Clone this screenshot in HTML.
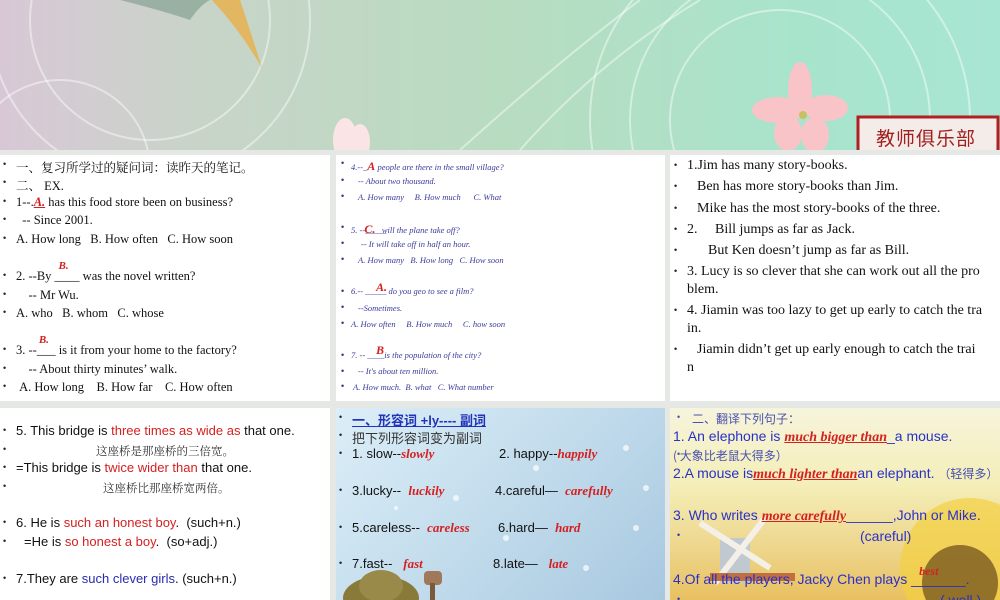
<!DOCTYPE html>
<html><head><meta charset="utf-8"><style>
*{margin:0;padding:0;box-sizing:border-box}
body{width:1000px;height:600px;overflow:hidden;background:#e6e8e6;position:relative;font-family:"Liberation Serif","Noto Serif CJK SC",serif}
.top{position:absolute;left:0;top:0;width:1000px;height:150px;background:linear-gradient(90deg,#d8c8d6 0%,#c8d4c8 20%,#b8dcc0 50%,#a8e4cc 80%,#a8e6d4 100%);overflow:hidden}
.p{position:absolute;background:#fff;overflow:hidden}
.l{position:absolute;white-space:nowrap;color:#111}
.b{position:absolute;font-size:9px;font-family:"Liberation Sans",sans-serif;color:#222}
.r{color:#d42020}
.s{font-family:"Liberation Sans","Noto Sans CJK SC",sans-serif}
.i{font-style:italic;color:#3a3a9a}
.ans{color:#d42020;font-style:italic;font-weight:bold;font-family:"Liberation Serif",serif}
</style></head><body>
<div class="top">
<svg width="1000" height="150" style="position:absolute;left:0;top:0">
<g fill="none" stroke="#ffffff" stroke-opacity=".45" stroke-width="2">
<circle cx="150" cy="20" r="120"/><circle cx="150" cy="20" r="160"/><circle cx="60" cy="170" r="90"/>
<circle cx="780" cy="120" r="150"/><circle cx="780" cy="120" r="190"/><circle cx="780" cy="120" r="110"/>
<path d="M460 150 Q560 60 640 0"/><path d="M520 150 Q600 60 700 0"/>
</g>
<path d="M120 0 Q160 10 190 20 Q200 5 210 0Z" fill="#7a9a8a" opacity=".6"/>
<path d="M212 0 Q240 30 262 68 Q250 30 240 0Z" fill="#e8b050" opacity=".85"/>
<g fill="#f8c4c8"><ellipse cx="800" cy="90" rx="12" ry="28"/><ellipse cx="778" cy="110" rx="26" ry="13"/><ellipse cx="826" cy="108" rx="22" ry="13"/><ellipse cx="788" cy="133" rx="14" ry="18"/><ellipse cx="815" cy="135" rx="14" ry="18"/></g>
<circle cx="803" cy="115" r="4" fill="#c8c060"/>
<g fill="#fbe4e6"><ellipse cx="345" cy="140" rx="12" ry="22"/><ellipse cx="360" cy="142" rx="10" ry="18"/></g>
<rect x="858" y="117" width="140" height="40" fill="#f4ece8" stroke="#b02020" stroke-width="3"/>
</svg>
<div style="position:absolute;left:876px;top:124px;font-size:19px;color:#a02020;font-family:'Noto Sans CJK SC',sans-serif;letter-spacing:1px">教师俱乐部</div>
</div>

<div class="p" style="left:0;top:155px;width:330px;height:246px">
<div style="font-size:12.5px">
<div class="l" style="top:3px;left:16px">一、复习所学过的疑问词：读昨天的笔记。</div>
<div class="l" style="top:21px;left:16px">二、 EX.</div>
<div class="l" style="top:40px;left:16px">1--.<span class="ans" style="text-decoration:underline">A.</span> has this food store been on business?</div>
<div class="l" style="top:58px;left:16px">&nbsp;&nbsp;-- Since 2001.</div>
<div class="l" style="top:77px;left:16px">A. How long &nbsp;&nbsp;B. How often &nbsp;&nbsp;C. How soon</div>
<div class="l" style="top:114px;left:16px">2. --By <span style="position:relative">____<span class="ans" style="position:absolute;left:4px;top:-9px;font-size:11px">B.</span></span> was the novel written?</div>
<div class="l" style="top:133px;left:16px">&nbsp;&nbsp;&nbsp;&nbsp;-- Mr Wu.</div>
<div class="l" style="top:151px;left:16px">A. who &nbsp;&nbsp;B. whom &nbsp;&nbsp;C. whose</div>
<div class="l" style="top:188px;left:16px">3. --<span style="position:relative">___<span class="ans" style="position:absolute;left:2px;top:-9px;font-size:11px">B.</span></span> is it from your home to the factory?</div>
<div class="l" style="top:207px;left:16px">&nbsp;&nbsp;&nbsp;&nbsp;-- About thirty minutes’ walk.</div>
<div class="l" style="top:225px;left:16px">&nbsp;A. How long &nbsp;&nbsp;&nbsp;B. How far &nbsp;&nbsp;&nbsp;C. How often</div>
</div>
<div class="b" style="top:4px;left:3px">•</div><div class="b" style="top:22px;left:3px">•</div><div class="b" style="top:41px;left:3px">•</div><div class="b" style="top:59px;left:3px">•</div><div class="b" style="top:78px;left:3px">•</div><div class="b" style="top:115px;left:3px">•</div><div class="b" style="top:134px;left:3px">•</div><div class="b" style="top:152px;left:3px">•</div><div class="b" style="top:189px;left:3px">•</div><div class="b" style="top:208px;left:3px">•</div><div class="b" style="top:226px;left:3px">•</div>
</div>

<div class="p" style="left:336px;top:155px;width:329px;height:246px">
<div style="font-size:8.5px">
<div class="l i" style="top:4px;left:15px">4.--_<span class="ans" style="font-size:12px">A</span> people are there in the small village?</div>
<div class="l i" style="top:21px;left:22px">-- About two thousand.</div>
<div class="l i" style="top:37px;left:22px">A. How many &nbsp;&nbsp;&nbsp;&nbsp;B. How much &nbsp;&nbsp;&nbsp;&nbsp;&nbsp;C. What</div>
<div class="l i" style="top:67px;left:15px">5. --_____<span class="ans" style="font-size:12px;margin-left:-22px">C.</span>&nbsp;&nbsp;&nbsp;will the plane take off?</div>
<div class="l i" style="top:84px;left:25px">-- It will take off in half an hour.</div>
<div class="l i" style="top:100px;left:22px">A. How many &nbsp;&nbsp;B. How long &nbsp;&nbsp;C. How soon</div>
<div class="l i" style="top:131px;left:15px">6.-- _____ do you geo to see a film?</div>
<div class="ans" style="position:absolute;top:125px;left:40px;font-size:12px">A.</div>
<div class="l i" style="top:148px;left:22px">--Sometimes.</div>
<div class="l i" style="top:164px;left:15px">A. How often &nbsp;&nbsp;&nbsp;&nbsp;B. How much &nbsp;&nbsp;&nbsp;&nbsp;C. how soon</div>
<div class="l i" style="top:195px;left:15px">7. -- ____is the population of the city?</div>
<div class="ans" style="position:absolute;top:188px;left:40px;font-size:12px">B</div>
<div class="l i" style="top:211px;left:22px">-- It's about ten million.</div>
<div class="l i" style="top:227px;left:17px">A. How much. &nbsp;B. what &nbsp;&nbsp;C. What number</div>
</div>
<div class="b" style="top:3px;left:5px;color:#33337a">•</div><div class="b" style="top:20px;left:5px;color:#33337a">•</div><div class="b" style="top:36px;left:5px;color:#33337a">•</div><div class="b" style="top:67px;left:5px;color:#33337a">•</div><div class="b" style="top:83px;left:5px;color:#33337a">•</div><div class="b" style="top:99px;left:5px;color:#33337a">•</div><div class="b" style="top:131px;left:5px;color:#33337a">•</div><div class="b" style="top:147px;left:5px;color:#33337a">•</div><div class="b" style="top:163px;left:5px;color:#33337a">•</div><div class="b" style="top:195px;left:5px;color:#33337a">•</div><div class="b" style="top:211px;left:5px;color:#33337a">•</div><div class="b" style="top:226px;left:5px;color:#33337a">•</div>
</div>

<div class="p" style="left:670px;top:155px;width:330px;height:246px">
<div style="font-size:14px">
<div class="l" style="top:3px;left:17px">1.Jim has many story-books.</div>
<div class="l" style="top:24px;left:27px">Ben has more story-books than Jim.</div>
<div class="l" style="top:46px;left:27px">Mike has the most story-books of the three.</div>
<div class="l" style="top:67px;left:17px">2. &nbsp;&nbsp;&nbsp;&nbsp;Bill jumps as far as Jack.</div>
<div class="l" style="top:88px;left:38px">But Ken doesn’t jump as far as Bill.</div>
<div class="l" style="top:109px;left:17px">3. Lucy is so clever that she can work out all the pro</div>
<div class="l" style="top:127px;left:17px">blem.</div>
<div class="l" style="top:148px;left:17px">4. Jiamin was too lazy to get up early to catch the tra</div>
<div class="l" style="top:166px;left:17px">in.</div>
<div class="l" style="top:187px;left:27px">Jiamin didn’t get up early enough to catch the trai</div>
<div class="l" style="top:205px;left:17px">n</div>
</div>
<div class="b" style="top:5px;left:4px">•</div><div class="b" style="top:26px;left:4px">•</div><div class="b" style="top:48px;left:4px">•</div><div class="b" style="top:69px;left:4px">•</div><div class="b" style="top:90px;left:4px">•</div><div class="b" style="top:111px;left:4px">•</div><div class="b" style="top:150px;left:4px">•</div><div class="b" style="top:189px;left:4px">•</div>
</div>

<div class="p s" style="left:0;top:408px;width:330px;height:192px">
<div style="font-size:13px">
<div class="l" style="top:15px;left:16px">5. This bridge is <span class="r">three times as wide as</span> that one.</div>
<div class="l" style="top:35px;left:96px;font-family:'Noto Serif CJK SC',serif;font-size:11.5px;color:#333">这座桥是那座桥的三倍宽。</div>
<div class="l" style="top:52px;left:16px">=This bridge is <span class="r">twice wider than</span> that one.</div>
<div class="l" style="top:72px;left:103px;font-family:'Noto Serif CJK SC',serif;font-size:11.5px;color:#333">这座桥比那座桥宽两倍。</div>
<div class="l" style="top:107px;left:16px">6. He is <span class="r">such an honest boy</span>. &nbsp;(such+n.)</div>
<div class="l" style="top:126px;left:24px">=He is <span class="r">so honest a boy</span>. &nbsp;(so+adj.)</div>
<div class="l" style="top:163px;left:16px">7.They are <span style="color:#2a2ab0">such clever girls</span>. (such+n.)</div>
</div>
<div class="b" style="top:17px;left:3px">•</div><div class="b" style="top:36px;left:3px">•</div><div class="b" style="top:54px;left:3px">•</div><div class="b" style="top:73px;left:3px">•</div><div class="b" style="top:109px;left:3px">•</div><div class="b" style="top:128px;left:3px">•</div><div class="b" style="top:165px;left:3px">•</div>
</div>

<div class="p s" style="left:336px;top:408px;width:329px;height:192px;background:linear-gradient(135deg,#dceef8 0%,#c2dcec 50%,#a8c8e0 100%)">
<svg width="329" height="192" style="position:absolute;left:0;top:0">
<g fill="#fff" opacity=".7"><circle cx="120" cy="90" r="3"/><circle cx="200" cy="60" r="3"/><circle cx="290" cy="40" r="3"/><circle cx="300" cy="120" r="3"/><circle cx="250" cy="160" r="3"/><circle cx="170" cy="130" r="3"/><circle cx="60" cy="100" r="2"/><circle cx="310" cy="80" r="3"/></g>
<ellipse cx="45" cy="190" rx="38" ry="22" fill="#8a7a3a"/><ellipse cx="45" cy="178" rx="22" ry="16" fill="#9a8a4a"/>
<rect x="88" y="163" width="18" height="14" rx="4" fill="#a0785a"/><rect x="94" y="175" width="5" height="20" fill="#7a5a3a"/>
</svg>
<div style="font-size:13px">
<div class="l" style="top:2px;left:16px;color:#2233bb;font-weight:bold;text-decoration:underline;font-family:'Liberation Sans','Noto Sans CJK SC',sans-serif">一、形容词 +ly---- 副词</div>
<div class="l" style="top:20px;left:16px;color:#333">把下列形容词变为副词</div>
<div class="l" style="top:38px;left:16px">1. slow--<span class="ans" style="font-size:13px">slowly</span></div>
<div class="l" style="top:38px;left:163px">2. happy--<span class="ans" style="font-size:13px">happily</span></div>
<div class="l" style="top:75px;left:16px">3.lucky-- &nbsp;<span class="ans" style="font-size:13px">luckily</span></div>
<div class="l" style="top:75px;left:159px">4.careful— &nbsp;<span class="ans" style="font-size:13px">carefully</span></div>
<div class="l" style="top:112px;left:16px">5.careless-- &nbsp;<span class="ans" style="font-size:13px">careless</span></div>
<div class="l" style="top:112px;left:162px">6.hard— &nbsp;<span class="ans" style="font-size:13px">hard</span></div>
<div class="l" style="top:148px;left:16px">7.fast-- &nbsp;&nbsp;<span class="ans" style="font-size:13px">fast</span></div>
<div class="l" style="top:148px;left:157px">8.late— &nbsp;&nbsp;<span class="ans" style="font-size:13px">late</span></div>
</div>
<div class="b" style="top:4px;left:3px">•</div><div class="b" style="top:22px;left:3px">•</div><div class="b" style="top:40px;left:3px">•</div><div class="b" style="top:77px;left:3px">•</div><div class="b" style="top:114px;left:3px">•</div><div class="b" style="top:150px;left:3px">•</div>
</div>

<div class="p s" style="left:670px;top:408px;width:330px;height:192px;background:linear-gradient(180deg,#f6f4dc 0%,#f4eeb8 40%,#eed890 70%,#e8c060 100%)">
<svg width="330" height="192" style="position:absolute;left:0;top:0">
<circle cx="300" cy="160" r="70" fill="#f4d040" opacity=".7"/><circle cx="290" cy="175" r="38" fill="#7a5a20" opacity=".8"/>
<rect x="50" y="130" width="30" height="45" fill="#c0c8d0"/>
<g stroke="#f4f0e8" stroke-width="6"><line x1="30" y1="115" x2="100" y2="160"/><line x1="95" y1="110" x2="45" y2="175"/></g>
<rect x="40" y="165" width="85" height="8" fill="#c07040"/>
</svg>
<div style="font-size:14px;color:#2a30c8">
<div class="l" style="top:2px;left:22px;color:#4850b0;font-size:12px;font-family:'Noto Sans CJK SC',sans-serif">二、翻译下列句子：</div>
<div class="l" style="top:20px;left:3px;color:#2a30c8">1. An elephone is <span style="text-decoration:underline" class="ans">much bigger than</span>_a mouse.</div>
<div class="l" style="top:39px;left:3px;color:#4850b0;font-size:12px;font-family:'Noto Sans CJK SC',sans-serif">( 大象比老鼠大得多）</div>
<div class="l" style="top:57px;left:3px;color:#2a30c8">2.A mouse is<span class="ans" style="text-decoration:underline">much lighter than</span>an elephant. <span style="font-size:12px;color:#4850b0">（轻得多）</span></div>
<div class="l" style="top:99px;left:3px;color:#2a30c8">3. Who writes <span class="ans" style="text-decoration:underline">more carefully</span>______,John or Mike.</div>
<div class="l" style="top:120px;left:190px;color:#2a30c8">(careful)</div>
<div class="l" style="top:163px;left:3px;color:#2a30c8">4.Of all the players, Jacky Chen plays <span style="position:relative">_______.<span class="ans" style="position:absolute;left:8px;top:-7px;font-size:12px">best</span></span></div>
<div class="l" style="top:184px;left:270px;color:#2a30c8">( well )</div>
</div>
<div class="b" style="top:4px;left:7px;color:#4850b0">•</div><div class="b" style="top:41px;left:7px;color:#4850b0">•</div><div class="b" style="top:122px;left:7px;color:#2a30c8">•</div><div class="b" style="top:186px;left:7px;color:#2a30c8">•</div>
</div>
</body></html>
